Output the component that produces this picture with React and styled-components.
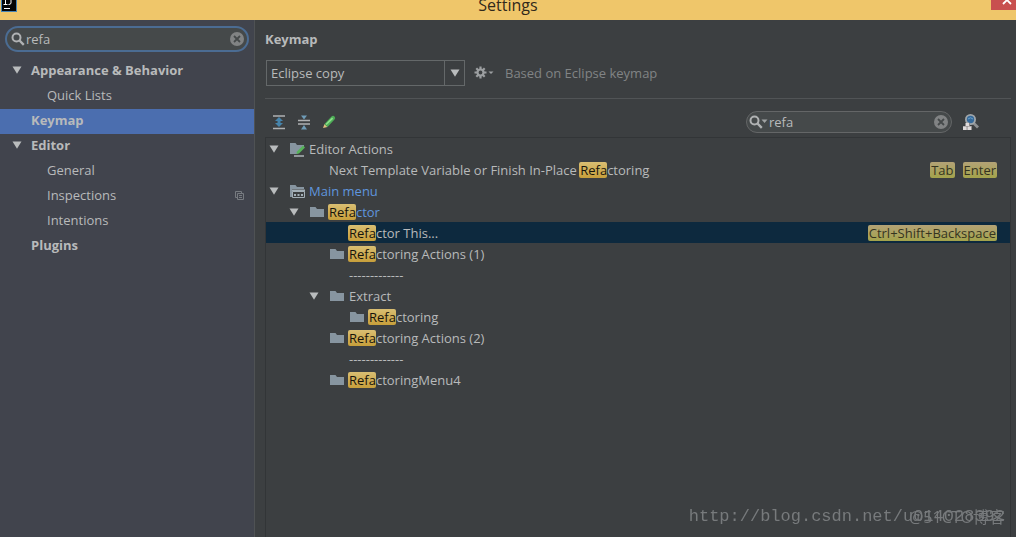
import { useState } from "react";
import styled, { createGlobalStyle } from "styled-components";

const pages = [
  { name: "Appearance & Behavior", group: true, open: true },
  { name: "Quick Lists" },
  { name: "Keymap", group: true },
  { name: "Editor", group: true, open: true },
  { name: "General" },
  { name: "Inspections", shared: true },
  { name: "Intentions" },
  { name: "Plugins", group: true },
];

const actions = [
  { id: 1, level: 0, open: true, icon: "editor", text: "Editor Actions" },
  {
    id: 2,
    level: 1,
    text: "Next Template Variable or Finish In-Place Refactoring",
    keys: ["Tab", "Enter"],
  },
  { id: 3, level: 0, open: true, icon: "menu", text: "Main menu", changed: true },
  { id: 4, level: 1, open: true, icon: "folder", text: "Refactor", changed: true },
  { id: 5, level: 2, text: "Refactor This...", keys: ["Ctrl+Shift+Backspace"] },
  { id: 6, level: 2, icon: "folder", text: "Refactoring Actions (1)" },
  { id: 7, level: 2, text: "-------------" },
  { id: 8, level: 2, open: true, icon: "folder", text: "Extract" },
  { id: 9, level: 3, icon: "folder", text: "Refactoring" },
  { id: 10, level: 2, icon: "folder", text: "Refactoring Actions (2)" },
  { id: 11, level: 2, text: "-------------" },
  { id: 12, level: 2, icon: "folder", text: "RefactoringMenu4" },
];

const Triangle = () => (
  <svg width="10" height="8" viewBox="0 0 10 8" aria-hidden="true">
    <path d="M0.5 0.5h9L5 7.8z" fill="#b9bcbd" />
  </svg>
);

const Magnifier = ({ arrow }) => (
  <svg width={arrow ? 19 : 14} height="14" viewBox={arrow ? "0 0 19 14" : "0 0 14 14"} aria-hidden="true">
    <circle cx="5.5" cy="5.5" r="4" fill="none" stroke="#b0b2b3" strokeWidth="2" />
    <path d="M8.5 8.5l4.3 4.3" stroke="#b0b2b3" strokeWidth="2.4" />
    {arrow && <path d="M12.5 4.5h6l-3 3.5z" fill="#a0a3a4" />}
  </svg>
);

const ClearIcon = () => (
  <svg width="14" height="14" viewBox="0 0 14 14" aria-hidden="true">
    <circle cx="7" cy="7" r="7" fill="#818384" />
    <path d="M4 4l6 6M10 4l-6 6" stroke="#45494a" strokeWidth="1.8" />
  </svg>
);

const FolderIcon = ({ type }) => (
  <svg width="16" height="16" viewBox="0 0 16 16" aria-hidden="true">
    {type === "editor" && (
      <>
        <path d="M1 2h5.5l1.5 2h7v2l-7 7H1z" fill="#8795a0" />
        <path d="M7.5 13l0.500-2.500 6-6 2 2-6 6z" fill="#57b35a" />
        <path d="M5 15h10" stroke="#b5bcc0" strokeWidth="1.4" />
      </>
    )}
    {type === "menu" && (
      <>
        <path d="M1 2h5.5l1.500 2h7v2H3v8H1z" fill="#8795a0" />
        <path d="M3.500 8.500h12v6h-12z" fill="none" stroke="#a3afb7" />
        <path d="M3 7.500h13" stroke="#a3afb7" strokeWidth="2" />
        <path d="M5 12h2M8.500 12h2M12 12h2" stroke="#a3afb7" strokeWidth="2" />
      </>
    )}
    {type === "folder" && <path d="M1 3h5.5l1.500 2h7v8H1z" fill="#8795a0" />}
  </svg>
);

// wraps the part of a label that the search text hits
const Highlight = ({ text, query }) => {
  const start = query ? text.toLowerCase().indexOf(query.toLowerCase()) : -1;
  if (start < 0) return text;
  const end = start + query.length;
  return (
    <>
      {text.slice(0, start)}
      <Match>{text.slice(start, end)}</Match>
      {text.slice(end)}
    </>
  );
};

export default function App() {
  const [pageQuery, setPageQuery] = useState("refa");
  const [query, setQuery] = useState("refa");
  const [page, setPage] = useState("Keymap");
  const [selectedID, setSelectedID] = useState(5);

  return (
    <Window>
      <GlobalStyle />
      <TitleBar>
        <Logo width="17" height="12" viewBox="0 0 17 12" aria-hidden="true">
          <path d="M1 0h16v12H1z" fill="#4683b5" />
          <path d="M2 0h14v11H2z" fill="#050505" />
          <path d="M3.500 4.500h4M5.500 0v4.500M11 0v3q0 1.500-2.500 1.500M4 8.500h6" fill="none" stroke="#fff" />
        </Logo>
        <Caption>Settings</Caption>
        <CloseButton type="button" aria-label="Close">
          <svg width="10" height="10" viewBox="0 0 10 10" aria-hidden="true">
            <path d="M1 1l8 8M9 1l-8 8" stroke="#fff" strokeWidth="1.8" />
          </svg>
        </CloseButton>
      </TitleBar>

      <Body>
        <Sidebar>
          <SearchBox $active>
            <Magnifier />
            <SearchInput
              aria-label="Search settings"
              value={pageQuery}
              onChange={(e) => setPageQuery(e.target.value)}
            />
            <IconButton type="button" aria-label="Clear settings search" onClick={() => setPageQuery("")}>
              <ClearIcon />
            </IconButton>
          </SearchBox>
          <nav>
            {pages.map((item) => (
              <PageRow
                key={item.name}
                type="button"
                $group={item.group}
                $selected={item.name === page}
                onClick={() => setPage(item.name)}
              >
                <PageArrow>{item.open && <Triangle />}</PageArrow>
                <PageName $group={item.group}>{item.name}</PageName>
                {item.shared && (
                  <svg width="9" height="9" viewBox="0 0 9 9" aria-hidden="true">
                    <path d="M2.500 2.500h6v6h-6zM6.500 2.500v-2h-6v6h2M4 4.500h3M4 6.500h3" fill="none" stroke="#777b80" />
                  </svg>
                )}
              </PageRow>
            ))}
          </nav>
        </Sidebar>

        <Main>
          <Heading>Keymap</Heading>
          <SchemeRow>
            <SelectBox>
              <Select aria-label="Keymap scheme" defaultValue="Eclipse copy">
                <option>Eclipse copy</option>
                <option>Eclipse</option>
              </Select>
              <SelectArrow>
                <Triangle />
              </SelectArrow>
            </SelectBox>
            <IconButton type="button" aria-label="Scheme options">
              <svg width="20" height="14" viewBox="0 0 20 14" aria-hidden="true">
                <path
                  d="M6.500 0.500v12M0.500 6.500h12M2.300 2.300l8.400 8.400M10.700 2.300l-8.400 8.400"
                  stroke="#9c9fa1"
                  strokeWidth="2.200"
                />
                <circle cx="6.500" cy="6.500" r="3" fill="#3c3f41" stroke="#9c9fa1" strokeWidth="2.200" />
                <path d="M14.500 5.500h5l-2.500 2.500z" fill="#9c9fa1" />
              </svg>
            </IconButton>
            <Hint>Based on Eclipse keymap</Hint>
          </SchemeRow>

          <Toolbar>
            <IconButton type="button" aria-label="Expand all">
              <svg width="14" height="16" viewBox="0 0 14 16" aria-hidden="true">
                <path d="M1 2h12M1 14.500h12" stroke="#afb1b3" strokeWidth="1.600" />
                <path d="M7 3l4 4H8.500v2H11l-4 4-4-4h2.500V7H3z" fill="#4684ab" />
              </svg>
            </IconButton>
            <IconButton type="button" aria-label="Collapse all">
              <svg width="14" height="16" viewBox="0 0 14 16" aria-hidden="true">
                <path d="M1 6.500h12M1 10h12" stroke="#afb1b3" strokeWidth="1.600" />
                <path d="M4 1.500h6L7 5.500zM4 15.500h6L7 11z" fill="#6f9cb8" />
              </svg>
            </IconButton>
            <IconButton type="button" aria-label="Edit shortcut">
              <svg width="14" height="16" viewBox="0 0 14 16" aria-hidden="true">
                <path d="M1 14l1.500-4 3 3z" fill="#e0c080" />
                <path d="M2.500 10l6.500-7q2-2 3.500-0.500t0 3L5.500 13z" fill="#4dac56" />
                <path d="M3.500 10l6.500-6.500 1.200 1.200L4.500 11z" fill="#8ee08c" />
              </svg>
            </IconButton>
            <Spacer />
            <SearchBox $width="206px">
              <Magnifier arrow />
              <SearchInput
                aria-label="Search actions"
                value={query}
                onChange={(e) => setQuery(e.target.value)}
              />
              <IconButton type="button" aria-label="Clear action search" onClick={() => setQuery("")}>
                <ClearIcon />
              </IconButton>
            </SearchBox>
            <IconButton type="button" aria-label="Find actions by shortcut">
              <svg width="16" height="16" viewBox="0 0 16 16" aria-hidden="true">
                <path d="M10.500 9l4.500 4.500" stroke="#8c8f91" strokeWidth="2.800" />
                <circle cx="7.500" cy="5.500" r="4.600" fill="#35699a" stroke="#a0a6aa" strokeWidth="1.800" />
                <path d="M5 5q2.500-2.500 5 0" fill="none" stroke="#6ba2c9" />
                <path d="M3 9h4v3h2v4H0v-4h3z" fill="#8a8586" />
                <path d="M2.500 9h3.500v3H2.500zM0 12.500h3.600v3.500H0zM4.500 12.500h3.600v3.500H4.500z" fill="#dedada" />
              </svg>
            </IconButton>
          </Toolbar>

          <Tree role="tree" aria-label="Actions">
            {actions.map((action) => (
              <ActionRow
                key={action.id}
                role="treeitem"
                aria-level={action.level + 1}
                aria-selected={action.id === selectedID}
                $level={action.level}
                $selected={action.id === selectedID}
                onClick={() => setSelectedID(action.id)}
              >
                <ActionArrow>{action.open && <Triangle />}</ActionArrow>
                <ActionIcon>{action.icon && <FolderIcon type={action.icon} />}</ActionIcon>
                <ActionName $changed={action.changed}>
                  <Highlight text={action.text} query={query} />
                </ActionName>
                {action.keys && action.keys.map((key) => <Key key={key}>{key}</Key>)}
              </ActionRow>
            ))}
          </Tree>
        </Main>
      </Body>
      <SiteMark>http://blog.csdn.net/u014028392</SiteMark>
      <BlogMark>@51CTO博客</BlogMark>
    </Window>
  );
}

const GlobalStyle = createGlobalStyle`
  * {
    box-sizing: border-box;
  }
  body {
    margin: 0;
    background: #3c3f41;
    overflow: hidden;
  }
  body, button, input, select {
    font-family: "Open Sans", "Noto Sans CJK SC", sans-serif;
    font-size: 13px;
    color: #b8babb;
  }
  svg {
    display: block;
    flex: none;
  }
`;

const Window = styled.div`
  display: flex;
  flex-direction: column;
  min-height: 100vh;
`;

const TitleBar = styled.header`
  display: grid;
  grid-template-columns: 1fr auto 1fr;
  align-items: start;
  height: 20px;
  background: #efc66a;
  overflow: hidden;
`;

const Logo = styled.svg`
  justify-self: start;
`;

const Caption = styled.h1`
  margin: 0;
  font-size: 16px;
  font-weight: 400;
  line-height: 10px;
  color: #30291b;
`;

const CloseButton = styled.button`
  justify-self: end;
  display: flex;
  align-items: end;
  justify-content: end;
  width: 25px;
  height: 10px;
  padding: 0 4px 5px;
  border: 0;
  background: #c8504f;
`;

const Body = styled.div`
  flex: 1;
  display: flex;
`;

const Sidebar = styled.aside`
  flex: none;
  width: 255px;
  padding-top: 6px;
  background: #41444d;
  border-right: 1px solid #4f5254;

  nav {
    margin-top: 7px;
  }
`;

const SearchBox = styled.div`
  display: flex;
  align-items: center;
  gap: 1px;
  width: ${(props) => props.$width || "auto"};
  height: ${(props) => (props.$active ? "26px" : "22px")};
  margin: ${(props) => (props.$active ? "0 5px" : "0")};
  padding: 0 3px 0 2px;
  border: ${(props) => (props.$active ? "2px solid #4b6c93" : "1px solid #646667")};
  border-radius: 13px;
  background: #45494a;

  svg:first-child {
    margin-left: ${(props) => (props.$active ? "2px" : "0")};
  }
`;

const SearchInput = styled.input`
  flex: 1;
  min-width: 0;
  padding: 0;
  border: 0;
  outline: 0;
  background: none;
`;

const IconButton = styled.button`
  padding: 0;
  border: 0;
  background: none;
`;

const PageRow = styled.button`
  display: flex;
  align-items: center;
  width: 100%;
  height: 25px;
  padding: 0 10px 3px 12px;
  border: 0;
  background: ${(props) => (props.$selected ? "#4b6eaf" : "none")};
  font-weight: ${(props) => (props.$group ? 700 : 400)};
  text-align: left;
`;

const PageArrow = styled.span`
  width: 19px;
`;

const PageName = styled.span`
  flex: 1;
  padding-left: ${(props) => (props.$group ? "0" : "16px")};
`;

const Main = styled.main`
  flex: 1;
  display: flex;
  flex-direction: column;
  min-width: 0;
  padding: 9px 5px 0 10px;
`;

const Heading = styled.h2`
  margin: 0;
  font-size: 13px;
  line-height: 20px;
`;

const SchemeRow = styled.div`
  display: flex;
  align-items: center;
  gap: 9px;
  padding: 11px 0 12px 1px;
  border-bottom: 1px solid #515456;
`;

const SelectBox = styled.div`
  display: grid;
  grid-template-columns: 1fr 20px;
  width: 199px;
  height: 26px;
  border: 1px solid #646869;
`;

const Select = styled.select`
  grid-area: 1 / 1 / 2 / 3;
  appearance: none;
  padding: 0 24px 0 4px;
  border: 0;
  outline: 0;
  background: none;
`;

const SelectArrow = styled.span`
  grid-area: 1 / 2 / 2 / 3;
  display: flex;
  align-items: center;
  justify-content: center;
  border-left: 1px solid #646869;
  pointer-events: none;
`;

const Hint = styled.span`
  padding-left: 2px;
  color: #818485;
`;

const Toolbar = styled.div`
  display: flex;
  align-items: center;
  gap: 11px;
  height: 38px;
  padding: 8px 32px 0 7px;
`;

const Spacer = styled.span`
  flex: 1;
`;

const Tree = styled.div`
  flex: 1;
  border: 1px solid #323537;
  border-bottom: 0;
`;

const ActionRow = styled.div`
  display: flex;
  align-items: center;
  height: 21px;
  padding: 0 13px 0 ${(props) => 3 + props.$level * 20}px;
  background: ${(props) => (props.$selected ? "#0d293e" : "none")};
`;

const ActionArrow = styled.span`
  width: 20px;
`;

const ActionIcon = styled.span`
  width: 20px;
`;

const ActionName = styled.span`
  flex: 1;
  white-space: pre;
  color: ${(props) => (props.$changed ? "#5f95dd" : "inherit")};
`;

const Match = styled.mark`
  display: inline-block;
  margin: 0 0 0 -1px;
  padding-left: 1px;
  border-radius: 2px;
  background: linear-gradient(#d9be72, #c79f3b);
  color: #17140c;
  line-height: 16px;
`;

const Key = styled.kbd`
  margin-left: 8px;
  padding: 0 1px;
  border-radius: 2px;
  background: linear-gradient(#b3a276, #a3a34b);
  color: #35341f;
  font-family: inherit;
  line-height: 16px;
`;

const SiteMark = styled.span`
  position: fixed;
  right: 11px;
  bottom: 9px;
  font-family: "Liberation Mono", monospace;
  font-size: 17px;
  line-height: 22px;
  color: #777a7c;
`;

const BlogMark = styled.span`
  position: fixed;
  right: 11px;
  bottom: 9px;
  font-size: 16px;
  line-height: 22px;
  color: #777a7c;
`;
